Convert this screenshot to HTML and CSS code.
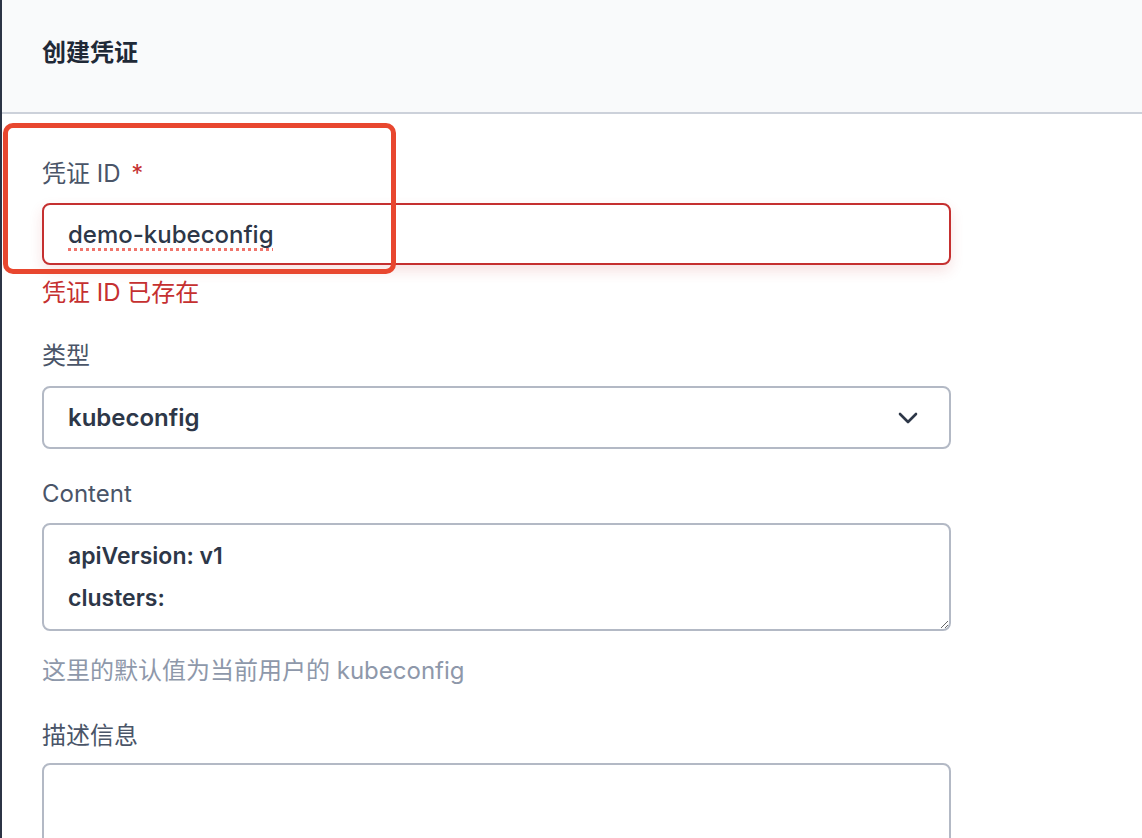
FILE: index.html
```html
<!DOCTYPE html>
<html lang="zh-CN">
<head>
<meta charset="utf-8">
<title>创建凭证</title>
<link rel="stylesheet" href="styles.css">
</head>
<body>
<div class="app">
  <div class="strip"></div>
  <div class="panel">
    <header class="panel-head">
      <h1 class="title">创建凭证</h1>
    </header>
    <form class="form">
      <div class="field">
        <label class="label">凭证 ID <span class="req">*</span></label>
        <div class="control control-error"><span class="misspelled">demo-kubeconfig</span></div>
        <p class="error">凭证 ID 已存在</p>
      </div>
      <div class="field field-select">
        <label class="label">类型</label>
        <div class="control control-select">
          <span class="select-value">kubeconfig</span>
          <svg class="chevron" width="20" height="12" viewBox="0 0 20 12"><polyline points="2,2 10,10 18,2" fill="none" stroke="#2d3748" stroke-width="2.6" stroke-linecap="round" stroke-linejoin="round"/></svg>
        </div>
      </div>
      <div class="field field-content">
        <label class="label">Content</label>
        <textarea class="textarea code" spellcheck="false">apiVersion: v1
clusters:
- cluster:
    certificate-authority-data: LS0tLS1CRUdJTi
    server: https://192.168.0.2:6443
  name: cluster.local</textarea>
        <p class="help">这里的默认值为当前用户的 kubeconfig</p>
      </div>
      <div class="field field-desc">
        <label class="label">描述信息</label>
        <textarea class="textarea desc"></textarea>
      </div>
    </form>
    <div class="annot"></div>
  </div>
</div>
</body>
</html>
```

FILE: styles.css
```css
* { box-sizing: border-box; }
html, body { margin: 0; padding: 0; height: 100%; overflow: hidden; background: #fff; }
body {
  font-family: Inter, "Noto Sans CJK SC", "Noto Sans", sans-serif;
  font-size: 24px;
  color: #2d3748;
}
.app { display: flex; height: 838px; }
.strip { width: 2px; flex: none; background: #2c3445; }
.panel { position: relative; flex: 1; min-width: 0; }
.panel-head {
  height: 114px;
  background: #f9fafb;
  border-bottom: 2px solid #ccd1da;
  padding: 35px 40px 0;
}
.title {
  margin: 0;
  font-size: 24px;
  line-height: 32px;
  font-weight: 700;
  color: #1f2937;
  font-family: "Noto Sans CJK SC", sans-serif;
}
.form { padding: 46px 0 0 40px; width: 949px; }
.field { display: flex; flex-direction: column; }
.label {
  font-family: Inter, "Noto Sans CJK SC", sans-serif;
  font-size: 24px;
  line-height: 28px;
  color: #4a5568;
  margin-bottom: 15px;
}
.req { color: #c53030; margin-left: 4px; }
.control {
  flex: none;
  height: 62px;
  border: 2px solid #b3b9c5;
  border-radius: 8px;
  background: #fff;
  padding: 0 24px;
  display: flex;
  align-items: center;
  font-weight: 500;
  color: #2d3748;
  font-size: 24px;
}
.control-error {
  border-color: #c53030;
  box-shadow: 0 6px 14px rgba(197, 48, 48, 0.14);
}
.misspelled {
  text-decoration: underline dotted #f0756c;
  text-decoration-thickness: 3px;
  text-underline-offset: 5px;
  text-decoration-skip-ink: none;
}
.error {
  margin: 14px 0 0;
  line-height: 28px;
  color: #c53030;
  font-size: 24px;
}
.field-select { margin-top: 35px; }
.field-select .label { margin-bottom: 16px; }
.control-select { height: 63px; justify-content: space-between; padding-right: 31px; font-weight: 600; }
.chevron { display: block; }
.field-content { margin-top: 31px; }
.textarea {
  display: block;
  flex: none;
  width: 100%;
  border: 2px solid #b3b9c5;
  border-radius: 8px;
  background: #fff;
  font-family: Inter, "Noto Sans CJK SC", sans-serif;
  font-size: 23px;
  color: #2d3748;
  resize: vertical;
  outline: none;
  scrollbar-width: none;
}
.code {
  height: 108px;
  padding: 10px 24px 0;
  line-height: 42px;
  font-weight: 600;
  overflow: hidden;
}
.help {
  margin: 26px 0 0;
  line-height: 28px;
  font-size: 24px;
  color: #8e98aa;
}
.field-desc { margin-top: 37px; }
.field-desc .label { margin-bottom: 13px; }
.desc { height: 160px; }
.annot {
  position: absolute;
  left: 1px;
  top: 123px;
  width: 393px;
  height: 151px;
  border: 5px solid #e8472f;
  border-radius: 10px;
  pointer-events: none;
}
```
